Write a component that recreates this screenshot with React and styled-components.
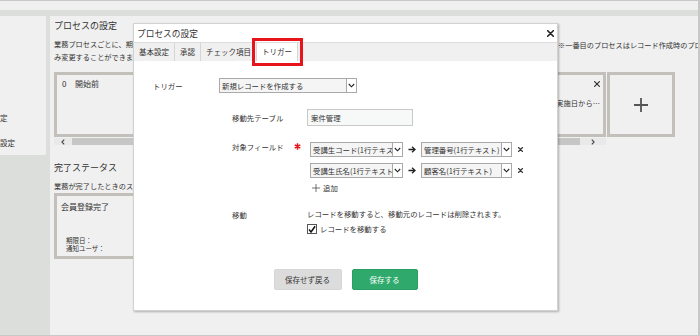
import styled, { createGlobalStyle } from "styled-components";

const GlobalStyle = createGlobalStyle`
  html, body {
    margin: 0;
    padding: 0;
    background: #ffffff;
  }
  body {
    font-family: "Noto Sans CJK JP", "Noto Sans", sans-serif;
    color: #333333;
  }
`;

const Frame = styled.div`
  position: relative;
  width: 700px;
  height: 336px;
  box-sizing: border-box;
  border-top: 1px solid #c8c8c8;
  border-right: 2px solid #c8c8c8;
  border-bottom: 1px solid #c8c8c8;
  background: #dcdedb;
  display: flex;
  flex-direction: column;
  overflow: hidden;
`;

const Header = styled.div`
  flex: none;
  height: 9px;
  margin-bottom: 6px;
  background: #f0f0f0;
`;

const Workspace = styled.div`
  flex: 1;
  min-height: 0;
  display: flex;
  gap: 4px;
`;

const Sidebar = styled.div`
  flex: none;
  width: 46px;
  height: 139px;
  box-sizing: border-box;
  padding-top: 96px;
  background: #f0f0f0;
  overflow: hidden;
  font-size: 7.5px;
  line-height: 12px;
`;

const SideItem = styled.div`
  white-space: nowrap;
  margin-left: ${(p) => p.$shift}px;
  & + & {
    margin-top: 13px;
  }
`;

const Main = styled.div`
  flex: 1;
  min-width: 0;
  box-sizing: border-box;
  padding: 4px 0 0 4px;
  background: #f0f0f0;
  overflow: hidden;
`;

const SectionTitle = styled.h2`
  margin: ${(p) => p.$top || 0}px 0 0;
  font-size: 9px;
  line-height: 12px;
  font-weight: normal;
  white-space: nowrap;
`;

const DescRow = styled.div`
  display: flex;
  margin-top: 5.5px;
  font-size: 7.2px;
  line-height: 13px;
`;

const Desc = styled.p`
  flex: none;
  width: 504px;
  margin: 0;
  white-space: nowrap;
`;

const Note = styled.div`
  white-space: nowrap;
  padding-top: 1px;
`;

const ProcessArea = styled.div`
  display: flex;
  align-items: flex-start;
  gap: 1px;
  margin-top: 8.5px;
`;

const Scroller = styled.div`
  flex: none;
  width: 552px;
`;

const CardsRow = styled.div`
  display: flex;
  gap: 2px;
  height: 65px;
`;

const ProcessCard = styled.div`
  flex: 1;
  min-width: 0;
  box-sizing: border-box;
  border: 3px solid #c3bfbb;
  background: #f0f0f0;
  padding: 4px 3px 0 5px;
  display: flex;
  flex-direction: column;
`;

const CardHead = styled.div`
  display: flex;
  align-items: center;
  justify-content: space-between;
  font-size: 8px;
  line-height: 10px;
  white-space: nowrap;
`;

const CardNum = styled.span`
  margin-right: 8.5px;
`;

const CardNote = styled.div`
  margin-top: 9px;
  display: flex;
  justify-content: flex-end;
  overflow: hidden;
  white-space: nowrap;
  font-size: 7.3px;
  line-height: 10px;
`;

const ScrollBar = styled.div`
  display: flex;
  align-items: center;
  height: 7px;
  margin-top: 1px;
  background: #e9e9e9;
`;

const ScrollBtn = styled.div`
  flex: none;
  width: ${(p) => p.$w}px;
  height: 7px;
  display: flex;
  align-items: center;
  justify-content: center;
`;

const Thumb = styled.div`
  flex: none;
  width: 508px;
  height: 7px;
  background: #c6c6c6;
`;

const AddCard = styled.div`
  flex: none;
  width: 68px;
  height: 65px;
  box-sizing: border-box;
  border: 3px solid #c3bfbb;
  background: #f0f0f0;
  display: flex;
  align-items: center;
  justify-content: center;
`;

const SmallDesc = styled.div`
  margin-top: 6px;
  font-size: 7.2px;
  line-height: 12px;
  white-space: nowrap;
`;

const DoneCard = styled.div`
  margin-top: 1px;
  width: 200px;
  height: 66px;
  box-sizing: border-box;
  border: 3px solid #c3bfbb;
  padding: 5px 4px;
`;

const DoneName = styled.div`
  font-size: 8px;
  line-height: 11px;
`;

const DoneMeta = styled.div`
  margin-top: ${(p) => p.$top || 0}px;
  padding-left: 5px;
  font-size: 6.5px;
  line-height: 8px;
`;

/* ---------- dialog ---------- */

const Dialog = styled.div`
  position: absolute;
  left: 133px;
  top: 22px;
  width: 425px;
  height: 288px;
  box-sizing: border-box;
  background: #ffffff;
  border: 1px solid #d2d2d2;
  box-shadow: 1px 1px 2px rgba(0, 0, 0, 0.28);
  display: flex;
  flex-direction: column;
`;

const TitleBar = styled.div`
  flex: none;
  height: 18px;
  padding: 0 3px 0 3px;
  border-bottom: 1px solid #dddddd;
  display: flex;
  align-items: center;
  justify-content: space-between;
  font-size: 8.7px;
`;

const TabBar = styled.div`
  flex: none;
  height: 18px;
  display: flex;
  background: #f0f0f0;
`;

const Tab = styled.div`
  position: relative;
  padding: 0 5px;
  font-size: 7.5px;
  line-height: 18px;
  border-right: 1px solid #d6d6d6;
  white-space: nowrap;
  background: ${(p) => (p.$active ? "#ffffff" : "transparent")};
  ${(p) =>
    p.$active &&
    `
    z-index: 1;
    outline: 3px solid #e8141c;
    outline-offset: 2px;
  `}
`;

const Form = styled.div`
  padding: 17px 0 0 19px;
  font-size: 7.4px;
`;

const TriggerRow = styled.div`
  display: flex;
  align-items: center;
  height: 15px;
`;

const TriggerLabel = styled.div`
  width: 66px;
`;

const Indent = styled.div`
  margin-left: 79px;
  margin-top: 16px;
`;

const FieldRow = styled.div`
  display: flex;
  align-items: ${(p) => p.$align || "center"};
  margin-top: ${(p) => p.$top || 0}px;
`;

const FieldLabel = styled.div`
  flex: none;
  width: ${(p) => p.$w || 75}px;
  display: flex;
  align-items: flex-start;
  line-height: 9px;
  padding-top: ${(p) => p.$pt || 0}px;
`;

const Required = styled.span`
  display: inline-flex;
  margin-left: 10px;
  margin-top: 1px;
`;

const TextInput = styled.div`
  width: 106px;
  height: 17px;
  box-sizing: border-box;
  border: 1px solid #c9c9c9;
  background: #f7f9f9;
  padding-left: 3px;
  line-height: 15px;
`;

const MapList = styled.div`
  display: flex;
  flex-direction: column;
  gap: 6px;
`;

const MapRow = styled.div`
  display: flex;
  align-items: center;
  height: 15px;
`;

const SelectBox = styled.div`
  flex: none;
  width: ${(p) => p.$w}px;
  height: ${(p) => p.$h || 15}px;
  box-sizing: border-box;
  border: 1px solid #a9a9a9;
  background: #f5f5f5;
  display: flex;
`;

const SelectText = styled.div`
  flex: 1;
  min-width: 0;
  overflow: hidden;
  white-space: nowrap;
  padding-left: 2px;
  line-height: 13px;
`;

const SelectArrow = styled.div`
  flex: none;
  width: 9px;
  border-left: 1px solid #a9a9a9;
  background: #ffffff;
  display: flex;
  align-items: center;
  justify-content: center;
`;

const MapArrow = styled.div`
  flex: none;
  width: 18px;
  display: flex;
  justify-content: center;
`;

const RemoveBtn = styled.div`
  margin-left: 6px;
  display: flex;
`;

const AddLink = styled.div`
  display: flex;
  align-items: center;
  gap: 3px;
  margin: 4px 0 0 2px;
  line-height: 12px;
`;

const Plain = styled.div`
  line-height: 12px;
`;

const CheckLine = styled.label`
  display: flex;
  align-items: center;
  gap: 3px;
  margin-top: 3px;
  line-height: 12px;
`;

const CheckBox = styled.span`
  width: 10px;
  height: 10px;
  box-sizing: border-box;
  border: 1px solid #555555;
  background: #ffffff;
  display: flex;
  align-items: center;
  justify-content: center;
`;

const ButtonRow = styled.div`
  display: flex;
  justify-content: center;
  gap: 10px;
  margin-top: 34px;
`;

const Button = styled.button`
  width: ${(p) => p.$w}px;
  height: 21px;
  border: 1px solid ${(p) => (p.$primary ? "#2a9e63" : "#d6d6d6")};
  border-radius: 2px;
  background: ${(p) => (p.$primary ? "#2faa6c" : "#dcdcdc")};
  color: ${(p) => (p.$primary ? "#ffffff" : "#333333")};
  font-family: inherit;
  font-size: 7.5px;
  padding: 0;
  cursor: pointer;
`;

/* ---------- icons ---------- */

const Cross = ({ size = 6, width = 1.2, color = "#333" }) => (
  <svg width={size} height={size} viewBox="0 0 10 10">
    <path d="M1 1 L9 9 M9 1 L1 9" stroke={color} strokeWidth={width * (10 / size)} strokeLinecap="round" />
  </svg>
);

const ChevronDown = () => (
  <svg width="7" height="5" viewBox="0 0 7 5">
    <polyline points="0.8,1 3.5,3.8 6.2,1" fill="none" stroke="#222" strokeWidth="1.1" />
  </svg>
);

const Chevron = ({ dir }) => (
  <svg width="4" height="6" viewBox="0 0 4 6">
    <polyline
      points={dir === "left" ? "3.2,0.6 0.9,3 3.2,5.4" : "0.8,0.6 3.1,3 0.8,5.4"}
      fill="none"
      stroke="#444"
      strokeWidth="1.1"
    />
  </svg>
);

const RightArrow = () => (
  <svg width="8" height="7" viewBox="0 0 8 7">
    <path d="M0.5 3.5 H7 M4 0.8 L7 3.5 L4 6.2" fill="none" stroke="#222" strokeWidth="1.3" />
  </svg>
);

const Plus = ({ size, width, color }) => (
  <svg width={size} height={size} viewBox="0 0 14 14">
    <path d="M7 0 V14 M0 7 H14" stroke={color} strokeWidth={width} />
  </svg>
);

const Asterisk = () => (
  <svg width="7" height="7" viewBox="0 0 8 8">
    <path d="M4 0.3 V7.7 M0.8 2.15 L7.2 5.85 M7.2 2.15 L0.8 5.85" stroke="#e8141c" strokeWidth="1.7" />
  </svg>
);

const Check = () => (
  <svg width="9" height="9" viewBox="0 0 9 9">
    <polyline points="1.2,4.6 3.4,7.2 8,0.8" fill="none" stroke="#111" strokeWidth="1.7" />
  </svg>
);

function Select({ w, h, children }) {
  return (
    <SelectBox $w={w} $h={h}>
      <SelectText>{children}</SelectText>
      <SelectArrow>
        <ChevronDown />
      </SelectArrow>
    </SelectBox>
  );
}

const mappings = [
  { from: "受講生コード(1行テキスト)", to: "管理番号(1行テキスト)" },
  { from: "受講生氏名(1行テキスト)", to: "顧客名(1行テキスト)" },
];

const tabs = ["基本設定", "承認", "チェック項目", "トリガー"];

export default function App() {
  return (
    <>
      <GlobalStyle />
      <Frame>
        <Header />
        <Workspace>
          <Sidebar>
            <SideItem $shift={-22.5}>基本設定</SideItem>
            <SideItem $shift={-30}>プロセス設定</SideItem>
          </Sidebar>
          <Main>
            <SectionTitle>プロセスの設定</SectionTitle>
            <DescRow>
              <Desc>
                業務プロセスごとに、期限日や通知ユーザーを設定できます。
                <br />
                み変更することができます。
              </Desc>
              <Note>※一番目のプロセスはレコード作成時のプロセスとなります。</Note>
            </DescRow>
            <ProcessArea>
              <Scroller>
                <CardsRow>
                  <ProcessCard>
                    <CardHead>
                      <span>
                        <CardNum>0</CardNum>開始前
                      </span>
                    </CardHead>
                  </ProcessCard>
                  <ProcessCard>
                    <CardHead>
                      <span>
                        <CardNum>1</CardNum>受講中
                      </span>
                      <Cross size={6} />
                    </CardHead>
                  </ProcessCard>
                  <ProcessCard>
                    <CardHead>
                      <span>
                        <CardNum>2</CardNum>受講完了
                      </span>
                      <Cross size={6} />
                    </CardHead>
                    <CardNote>
                      <span>期限日：実施日から…</span>
                    </CardNote>
                  </ProcessCard>
                </CardsRow>
                <ScrollBar>
                  <ScrollBtn $w={18}>
                    <Chevron dir="left" />
                  </ScrollBtn>
                  <Thumb />
                  <ScrollBtn $w={26}>
                    <Chevron dir="right" />
                  </ScrollBtn>
                </ScrollBar>
              </Scroller>
              <AddCard>
                <Plus size={14} width={1.8} color="#555" />
              </AddCard>
            </ProcessArea>

            <SectionTitle $top={17}>完了ステータス</SectionTitle>
            <SmallDesc>業務が完了したときのステータスを設定します。</SmallDesc>
            <DoneCard>
              <DoneName>会員登録完了</DoneName>
              <DoneMeta $top={24}>期限日：</DoneMeta>
              <DoneMeta>通知ユーザ：</DoneMeta>
            </DoneCard>
          </Main>
        </Workspace>

        <Dialog>
          <TitleBar>
            <span>プロセスの設定</span>
            <Cross size={7} width={1.6} color="#222" />
          </TitleBar>
          <TabBar>
            {tabs.map((t) => (
              <Tab key={t} $active={t === "トリガー"}>
                {t}
              </Tab>
            ))}
          </TabBar>
          <Form>
            <TriggerRow>
              <TriggerLabel>トリガー</TriggerLabel>
              <Select w={138}>新規レコードを作成する</Select>
            </TriggerRow>
            <Indent>
              <FieldRow>
                <FieldLabel>移動先テーブル</FieldLabel>
                <TextInput>案件管理</TextInput>
              </FieldRow>
              <FieldRow $align="flex-start" $top={16}>
                <FieldLabel $w={78} $pt={0}>
                  対象フィールド
                  <Required>
                    <Asterisk />
                  </Required>
                </FieldLabel>
                <div>
                  <MapList>
                    {mappings.map((m) => (
                      <MapRow key={m.from}>
                        <Select w={93}>{m.from}</Select>
                        <MapArrow>
                          <RightArrow />
                        </MapArrow>
                        <Select w={91}>{m.to}</Select>
                        <RemoveBtn>
                          <Cross size={5} width={1.1} color="#333" />
                        </RemoveBtn>
                      </MapRow>
                    ))}
                  </MapList>
                  <AddLink>
                    <Plus size={8} width={1.3} color="#444" />
                    追加
                  </AddLink>
                </div>
              </FieldRow>
              <FieldRow $align="flex-start" $top={14}>
                <FieldLabel $pt={1.5}>移動</FieldLabel>
                <div>
                  <Plain>レコードを移動すると、移動元のレコードは削除されます。</Plain>
                  <CheckLine>
                    <CheckBox>
                      <Check />
                    </CheckBox>
                    レコードを移動する
                  </CheckLine>
                </div>
              </FieldRow>
            </Indent>
          </Form>
          <ButtonRow>
            <Button $w={68}>保存せず戻る</Button>
            <Button $w={66} $primary>
              保存する
            </Button>
          </ButtonRow>
        </Dialog>
      </Frame>
    </>
  );
}
